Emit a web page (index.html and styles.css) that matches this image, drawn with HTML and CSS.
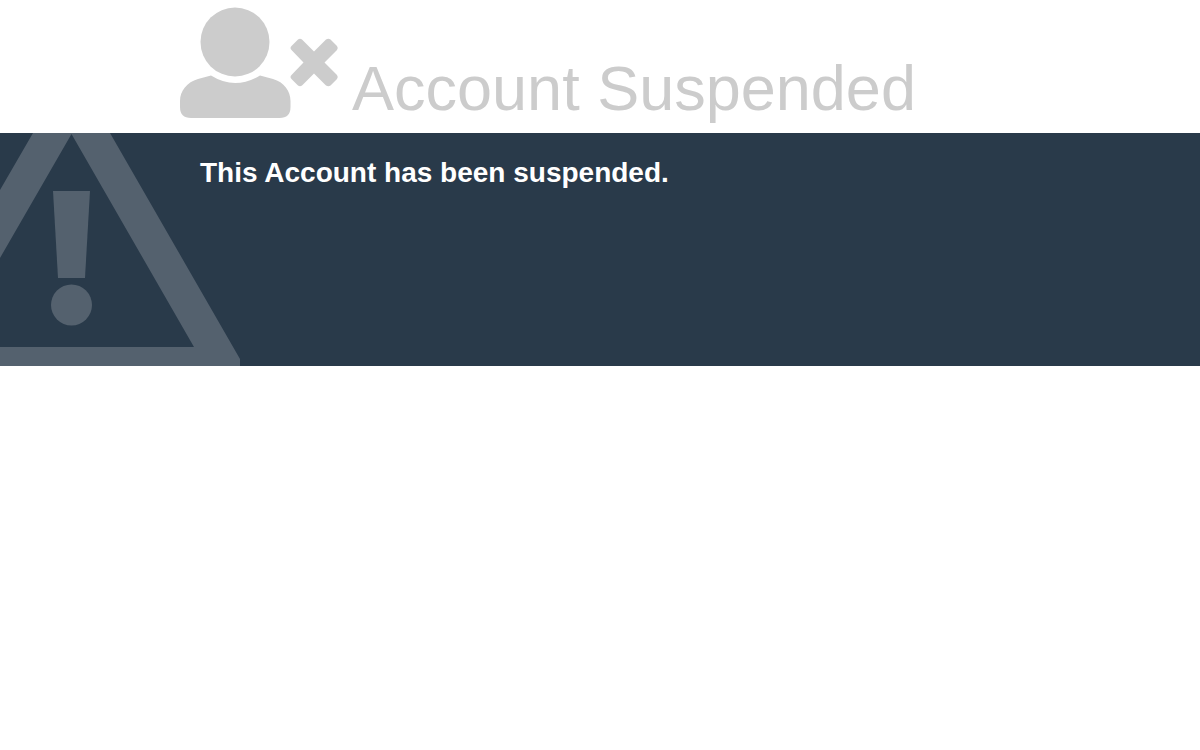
FILE: index.html
```html
<!DOCTYPE html>
<html lang="en">
<head>
<meta charset="utf-8">
<meta name="viewport" content="width=device-width, initial-scale=1">
<title>Account Suspended</title>
<link rel="stylesheet" href="styles.css">
</head>
<body>
<header class="header">
  <svg class="user-icon" viewBox="0 0 160 120" aria-hidden="true">
    <circle cx="55" cy="42" r="34.5"/>
    <path d="M31 75.500Q55 90.500 80 75.500L93 79C104 82 110.500 91 110.500 101V107Q110.500 118 99.500 118H11Q0 118 0 107V101C0 91 7 82 18 79Z"/>
    <path d="M118 39.500Q120 38 122 39.500L134 51.500L146 39.500Q148.500 38 150.500 39.500L157 46Q158.500 48 157 50L144.500 62.500L157 75Q158.500 77 157 79L150.500 85.500Q148.500 87 146 85.500L134 73.500L122 85.500Q120 87 118 85.500L111.500 79Q109.500 77 111.500 75L123.500 62.500L111.500 50Q109.500 48 111.500 46Z"/>
  </svg>
  <h1 class="title">Account Suspended</h1>
</header>
<main class="notice">
  <svg class="warning-icon" viewBox="0 0 240 233" aria-hidden="true">
    <path fill-rule="evenodd" d="M0 57L33 0H110L240 226V233H0V214H194L71.500 1L0 125Z"/>
    <path d="M53 58H90L85 145H58Z"/>
    <circle cx="71.500" cy="172" r="20.500"/>
  </svg>
  <p class="message">This Account has been suspended.</p>
</main>
</body>
</html>
```
FILE: styles.css
```css
body {
  margin: 0;
  background: #fff;
  font-family: "Liberation Sans", Arial, sans-serif;
}

.header {
  display: flex;
  align-items: flex-end;
  gap: 12px;
  padding: 0 15% 13px;
  color: #ccc;
}

.user-icon {
  flex: none;
  width: 160px;
  height: 120px;
  fill: currentColor;
}

.title {
  margin: 0;
  font-size: 63px;
  line-height: 64px;
  font-weight: 400;
}

.notice {
  display: grid;
  background: #293a4a;
  color: #fff;
}

.warning-icon {
  grid-area: 1 / 1;
  width: 240px;
  height: 233px;
  fill: #54616e;
}

.message {
  grid-area: 1 / 1;
  margin: 0;
  padding: 24px 200px;
  font-size: 28px;
  line-height: 32px;
  font-weight: 700;
}
```
